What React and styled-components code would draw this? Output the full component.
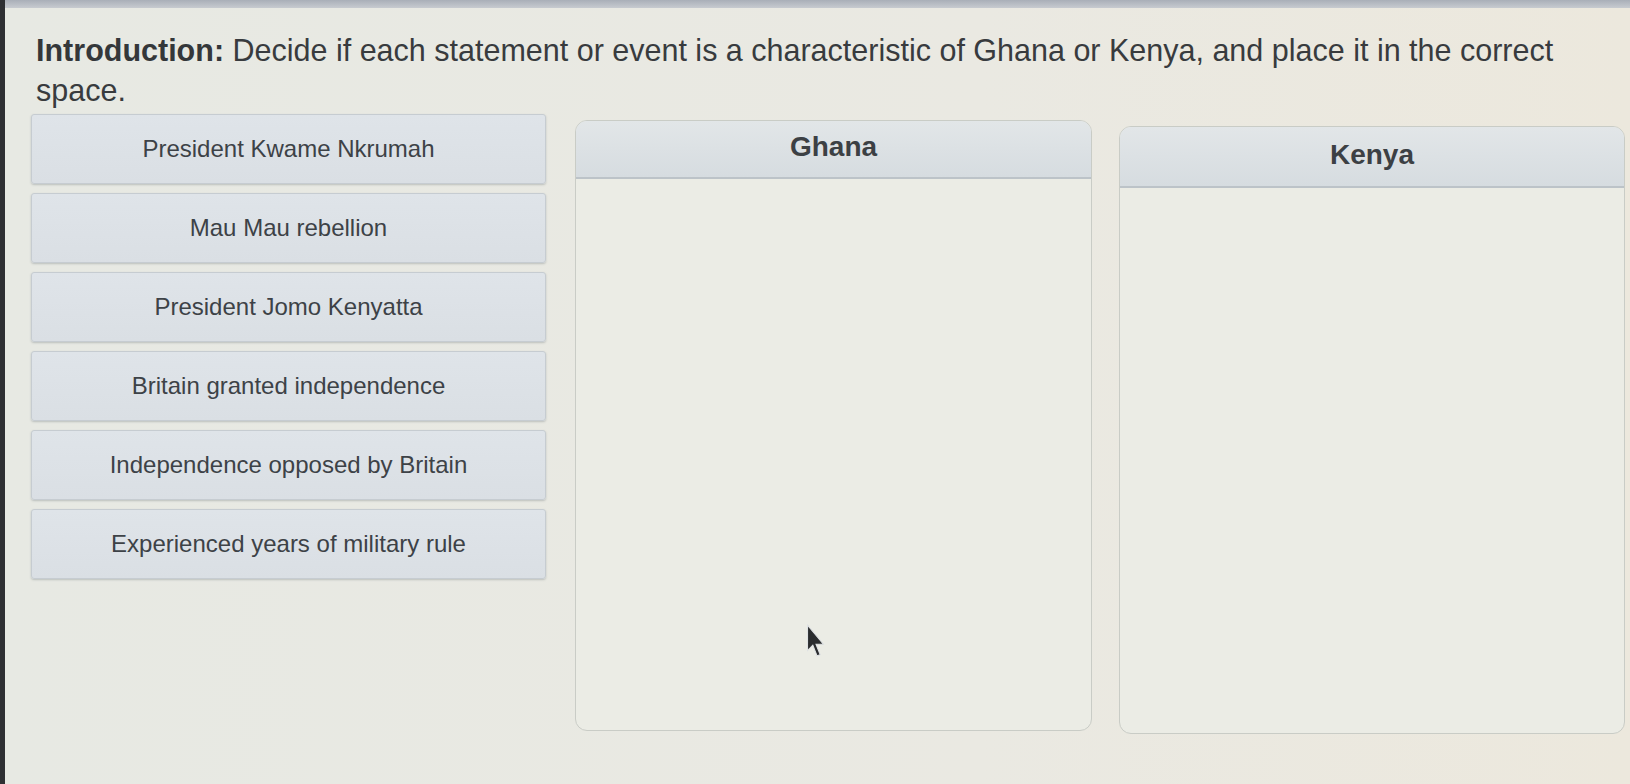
import React from "react";
import styled, { createGlobalStyle } from "styled-components";

const Global = createGlobalStyle`
  html, body { margin: 0; padding: 0; }
  body {
    background: #e9eae2;
    font-family: "Liberation Sans", Arial, sans-serif;
    width: 1630px;
    height: 784px;
    overflow: hidden;
  }
`;

const Screen = styled.div`
  position: relative;
  width: 1630px;
  height: 784px;
  background: linear-gradient(90deg, #e7e9e3 0%, #eae9e2 60%, #ece8dd 100%);
  border-left: 5px solid #2e3033;
  box-sizing: border-box;
  display: flex;
  flex-direction: column;
`;

const TopBand = styled.div`
  height: 8px;
  background: linear-gradient(180deg, #a9afb8 0%, #c7cbd0 100%);
  flex: none;
`;

const Content = styled.div`
  padding: 22px 0 0 26px;
  display: flex;
  flex-direction: column;
  gap: 4px;
`;

const Intro = styled.p`
  margin: 0 0 0 5px;
  max-width: 1560px;
  font-size: 30.5px;
  line-height: 40px;
  color: #383b3e;
  b { font-weight: 700; color: #34373a; }
`;

const Board = styled.div`
  display: grid;
  grid-template-columns: 515px 519px 506px;
  column-gap: 27px;
  align-items: start;
`;

const CardList = styled.div`
  display: flex;
  flex-direction: column;
  gap: 9px;
`;

const Card = styled.div`
  height: 70px;
  display: flex;
  align-items: center;
  justify-content: center;
  background: linear-gradient(180deg, #dfe4e9 0%, #dadfe4 100%);
  border: 1px solid #c6ccd1;
  border-radius: 3px;
  box-shadow: 0 1px 2px rgba(60, 70, 80, 0.25);
  font-size: 24px;
  color: #3d4247;
  box-sizing: border-box;
`;

const Bin = styled.div`
  margin-top: ${(p) => p.$offset}px;
  margin-left: ${(p) => p.$shift}px;
  height: ${(p) => p.$height}px;
  background: #ebece5;
  border: 1px solid #c9ccc6;
  border-radius: 12px;
  overflow: hidden;
  display: flex;
  flex-direction: column;
  box-sizing: border-box;
`;

const BinHeader = styled.div`
  height: ${(p) => p.$h}px;
  flex: none;
  display: flex;
  align-items: center;
  justify-content: center;
  padding-bottom: 4px;
  box-sizing: border-box;
  background: linear-gradient(180deg, #e2e6e8 0%, #d6dce0 100%);
  border-bottom: 2px solid #bcc3c8;
  font-size: 28px;
  font-weight: 700;
  color: #3c4044;
`;

const BinBody = styled.div`
  flex: 1;
`;

const Cursor = styled.svg`
  position: absolute;
  left: 799px;
  top: 623px;
  width: 24px;
  height: 36px;
`;

const items = [
  "President Kwame Nkrumah",
  "Mau Mau rebellion",
  "President Jomo Kenyatta",
  "Britain granted independence",
  "Independence opposed by Britain",
  "Experienced years of military rule",
];

export default function App() {
  return (
    <>
      <Global />
      <Screen>
        <TopBand />
        <Content>
          <Intro>
            <b>Introduction:</b> Decide if each statement or event is a characteristic of Ghana or Kenya, and place it in the correct space.
          </Intro>
          <Board>
            <CardList>
              {items.map((t) => (
                <Card key={t}>{t}</Card>
              ))}
            </CardList>
            <Bin $offset={6} $shift={2} $height={611}>
              <BinHeader $h={58}>Ghana</BinHeader>
              <BinBody />
            </Bin>
            <Bin $offset={12} $shift={0} $height={608}>
              <BinHeader $h={61}>Kenya</BinHeader>
              <BinBody />
            </Bin>
          </Board>
        </Content>
        <Cursor viewBox="0 0 22 34">
          <path d="M3 2 L3 26 L8 21 L12 31 L15 30 L11 20 L18 20 Z" fill="#2a2c2e" stroke="#dfe2e4" strokeWidth="1" />
        </Cursor>
      </Screen>
    </>
  );
}
